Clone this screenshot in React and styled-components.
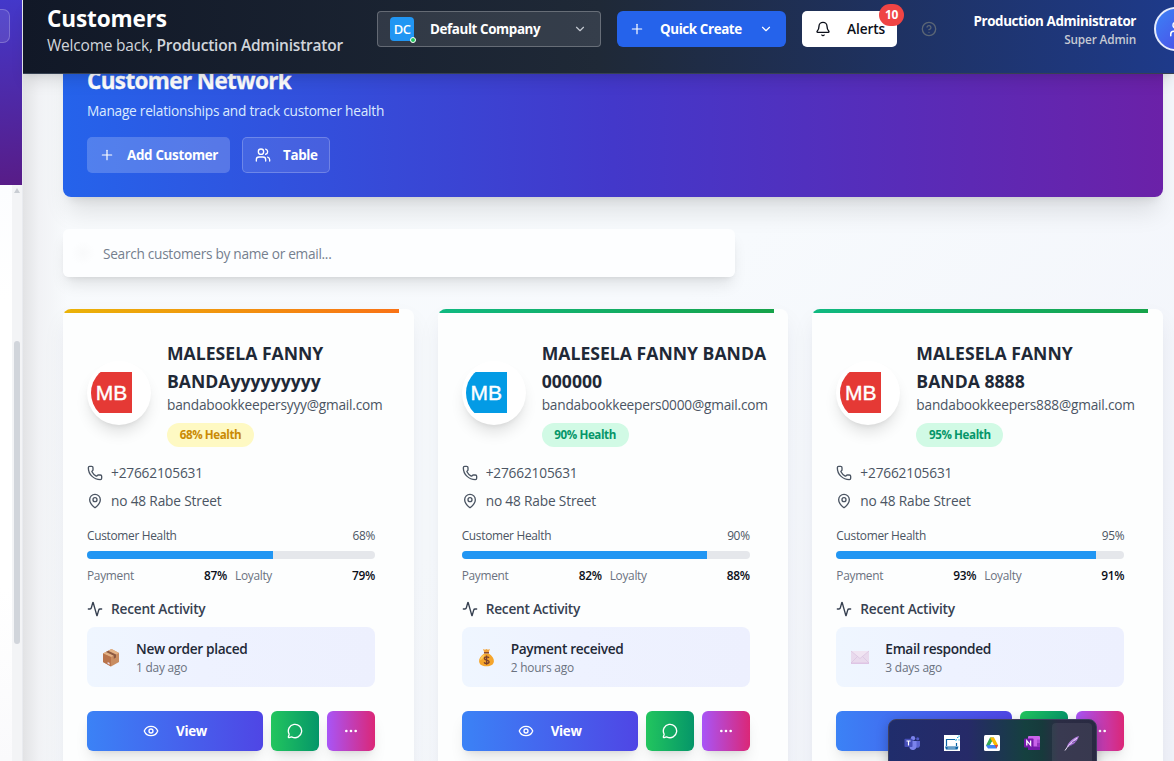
import React from "react";
import styled, { createGlobalStyle, css } from "styled-components";
import { Plus, ChevronDown, Bell, CircleHelp, Users, User, Phone, MapPin, Activity, Eye, MessageCircle, Ellipsis } from "lucide-react";

const Global = createGlobalStyle`
  * { box-sizing: border-box; }
  body { margin: 0; overflow: hidden; font-family: "Open Sans", "Noto Sans", sans-serif; }
  button { font-family: inherit; border: 0; padding: 0; margin: 0; }
  h1, h2, h3, p { margin: 0; }
  svg { flex: none; display: block; }
`;

const type = (size, line, weight, color, spacing = 0) => css`
  font-size: ${size}px;
  line-height: ${line}px;
  font-weight: ${weight};
  color: ${color};
  letter-spacing: ${spacing}px;
  white-space: nowrap;
`;

const Shell = styled.div`
  width: 1174px;
  height: 761px;
  display: grid;
  grid-template-columns: 23px 1fr;
  overflow: hidden;
  position: relative;
`;
const Sidebar = styled.aside`
  display: flex;
  flex-direction: column;
  height: 761px;
  background: #fff;
  border-right: 1px solid #e9ebef;
`;
const SidebarBrand = styled.div`
  height: 185px;
  padding-top: 9px;
  background: linear-gradient(174deg, #4338ca, #581c87);
`;
const CollapseButton = styled.button`
  display: block;
  width: 10px;
  height: 34px;
  border: 1px solid rgba(255, 255, 255, 0.22);
  border-left: 0;
  border-radius: 0 7px 7px 0;
  background: rgba(255, 255, 255, 0.1);
`;
const SidebarScroll = styled.div`
  flex: 1;
  display: flex;
  justify-content: flex-end;
  background: linear-gradient(#fcfdff, #fff 20%, #fff 70%, #fafafc);
`;
const Track = styled.div`
  width: 10px;
  display: flex;
  flex-direction: column;
  align-items: center;
  padding-top: 3px;
  background: #f3f4f6;
`;
const ArrowUp = styled.svg`
  margin-bottom: 148px;
`;
const Thumb = styled.div`
  width: 6px;
  height: 303px;
  border-radius: 3px;
  background: #d1d5db;
`;

const Main = styled.main`
  display: flex;
  flex-direction: column;
  min-width: 0;
  height: 761px;
  background: linear-gradient(90deg, #e2e3e5 0, rgba(240, 241, 244, 0.9) 16px, rgba(248, 250, 252, 0) 44px),
    linear-gradient(135deg, #f8fafc, #f7fafd 50%, #f1f3fa);
`;
const TopBar = styled.header`
  flex: none;
  height: 74px;
  position: relative;
  z-index: 2;
  display: flex;
  align-items: flex-start;
  padding: 7px 0 0 24px;
  background: linear-gradient(90deg, #111827, #1f2937 50%, #1e3a8a);
  border-bottom: 1px solid #364152;
  box-shadow: 0 10px 15px -3px rgba(0, 0, 0, 0.1), 0 4px 6px -2px rgba(0, 0, 0, 0.06);
`;
const Heading = styled.div`
  width: 330px;
  flex: none;
`;
const PageTitle = styled.h1`
  ${type(22.6, 24, 700, "#fff", -0.15)}
`;
const Welcome = styled.p`
  ${type(15.5, 24, 400, "#d1d5db", -0.21)}
  margin-top: 2px;
  b { font-weight: 600; }
`;
const CompanySelect = styled.button`
  width: 224px;
  height: 36px;
  margin-top: 4px;
  flex: none;
  display: flex;
  align-items: center;
  padding: 0 13px 0 12px;
  border: 1px solid rgba(255, 255, 255, 0.25);
  border-radius: 4px;
  background: rgba(255, 255, 255, 0.1);
`;
const CompanyBadge = styled.span`
  ${type(13, 24, 600, "#fff", -0.7)}
  position: relative;
  width: 24px;
  height: 24px;
  border-radius: 4px;
  text-align: center;
  background: #2196f3;
`;
const OnlineDot = styled.i`
  position: absolute;
  right: -2px;
  bottom: -2px;
  width: 6px;
  height: 6px;
  border-radius: 50%;
  border: 1px solid #fff;
  background: #22c55e;
`;
const CompanyName = styled.span`
  ${type(13.4, 20, 700, "#fff", -0.4)}
  flex: 1;
  margin-left: 16px;
  text-align: left;
`;
const QuickCreate = styled.button`
  width: 169px;
  height: 36px;
  margin: 4px 0 0 16px;
  flex: none;
  display: flex;
  align-items: center;
  padding: 0 13px 0 12px;
  border-radius: 6px;
  color: #fff;
  background: #2563eb;
  span { ${type(13.4, 20, 700, "#fff", -0.4)} margin: 0 auto 0 15px; }
`;
const AlertsButton = styled.button`
  width: 95px;
  height: 36px;
  margin: 4px 0 0 16px;
  flex: none;
  display: flex;
  align-items: center;
  gap: 16px;
  padding-left: 13px;
  border-radius: 5px;
  position: relative;
  background: #fff;
  color: #0b0f19;
`;
const AlertsLabel = styled.span`
  ${type(13.7, 20, 600, "#0b0f19", -0.1)}
`;
const AlertCount = styled.span`
  ${type(12, 22, 700, "#fff", -0.4)}
  position: absolute;
  right: -7px;
  top: -7px;
  width: 25px;
  height: 22px;
  border-radius: 11px;
  text-align: center;
  background: #ef4444;
`;
const HelpIcon = styled(CircleHelp)`
  margin: 14px 0 0 24px;
  color: #5b6675;
`;
const Account = styled.div`
  width: 200px;
  text-align: right;
  padding-top: 4px;
`;
const AccountName = styled.div`
  ${type(13.4, 20, 700, "#fff", -0.4)}
`;
const AccountRole = styled.div`
  ${type(11.8, 16, 600, "#c5cad3", -0.15)}
`;
const AccountSlot = styled.div`
  width: 20px;
  height: 44px;
  margin-left: 18px;
  flex: none;
`;
const AccountAvatar = styled.div`
  width: 44px;
  height: 44px;
  display: grid;
  place-items: center;
  border-radius: 50%;
  border: 2px solid #e5ebfb;
  color: #fff;
  background: linear-gradient(135deg, #3b82f6, #4f46e5);
`;

const Content = styled.div`
  flex: 1;
  min-height: 0;
  overflow: hidden;
  padding: 0 11px 0 40px;
`;
const Hero = styled.section`
  height: 158px;
  margin-top: -35px;
  padding: 24px;
  border-radius: 8px;
  background: linear-gradient(to right, #2563eb, #4338ca 50%, #6b21a8);
  box-shadow: 0 20px 25px -5px rgba(0, 0, 0, 0.1), 0 8px 10px -6px rgba(0, 0, 0, 0.1);
`;
const HeroTitle = styled.h2`
  ${type(22.5, 36, 700, "#fff", -0.63)}
  -webkit-text-stroke: 0.3px #fff;
`;
const HeroText = styled.p`
  ${type(13.7, 20, 400, "#dbeafe", -0.25)}
  margin-top: 2px;
`;
const HeroActions = styled.div`
  display: flex;
  gap: 12px;
  margin-top: 16px;
`;
const HeroButton = styled.button`
  width: ${(p) => p.$width}px;
  height: 36px;
  display: flex;
  align-items: center;
  gap: 12px;
  padding-left: ${(p) => (p.$outlined ? 12 : 11)}px;
  border-radius: 5px;
  color: #fff;
  background: rgba(255, 255, 255, ${(p) => (p.$outlined ? 0.1 : 0.2)});
  border: ${(p) => (p.$outlined ? "1px solid rgba(255, 255, 255, 0.22)" : "1px solid transparent")};
  span { ${type(13.4, 20, 700, "#fff", -0.32)} }
`;
const SearchField = styled.div`
  ${type(13.7, 20, 400, "#757f8e", -0.3)}
  width: 672px;
  height: 48px;
  margin-top: 32px;
  padding: 15px 0 0 40px;
  border-radius: 6px;
  background: radial-gradient(circle at 20px 24px, #f9fafb 0, #fdfeff 12px);
  box-shadow: 0 10px 15px -3px rgba(0, 0, 0, 0.1), 0 4px 6px -4px rgba(0, 0, 0, 0.1);
`;
const CardGrid = styled.div`
  display: grid;
  grid-template-columns: repeat(3, 1fr);
  gap: 24px;
  margin-top: 32px;
`;
const Card = styled.article`
  height: 480px;
  border-radius: 8px;
  overflow: hidden;
  background: #fdfefe;
`;
const CardShadow = styled.div`
  min-width: 0;
  border-radius: 8px;
  box-shadow: 0 10px 25px -3px rgba(30, 30, 60, 0.08), 0 4px 6px -4px rgba(0, 0, 0, 0.08);
`;
const Stripe = styled.div`
  width: 336px;
  height: 4px;
  background: ${(p) => (p.$warm ? "linear-gradient(90deg, #eab308, #f97316)" : "linear-gradient(90deg, #10b981, #16a34a)")};
`;
const CardBody = styled.div`
  width: 336px;
  padding: 26px 24px;
`;
const Profile = styled.div`
  display: flex;
  align-items: center;
  gap: 16px;
`;
const AvatarRing = styled.div`
  width: 64px;
  height: 64px;
  flex: none;
  padding: 4px;
  border-radius: 50%;
  background: #fff;
  box-shadow: 0 10px 15px -3px rgba(0, 0, 0, 0.12), 0 4px 6px -4px rgba(0, 0, 0, 0.1);
`;
const AvatarDisc = styled.div`
  width: 56px;
  height: 56px;
  border-radius: 50%;
  overflow: hidden;
  display: flex;
  align-items: center;
`;
const AvatarImage = styled.div`
  width: 41px;
  height: 41px;
  margin-top: -1px;
  background: ${(p) => p.$color};
  font-family: "Liberation Sans", sans-serif;
  font-size: 21px;
  line-height: 41px;
  text-align: center;
  color: #fff;
  -webkit-text-stroke: 0.4px #fff;
`;
const CustomerName = styled.h3`
  ${type(17.6, 28, 700, "#1f2937", 0.02)}
`;
const Email = styled.div`
  ${type(13.7, 20, 400, "#4b5563", -0.21)}
`;
const HealthBadge = styled.span`
  ${type(11.6, 24, 700, "#ca8a04", -0.4)}
  display: block;
  width: 87px;
  height: 24px;
  margin-top: 8px;
  border-radius: 12px;
  text-align: center;
  color: ${(p) => (p.$warm ? "#ca8a04" : "#059669")};
  background: ${(p) => (p.$warm ? "#fef9c3" : "#d1fae5")};
`;
const ContactList = styled.div`
  display: grid;
  gap: 8px;
  margin-top: 16px;
`;
const ContactRow = styled.div`
  ${type(13.7, 20, 400, "#4b5563", -0.17)}
  display: flex;
  align-items: center;
  gap: 8px;
`;
const HealthHead = styled.div`
  ${type(11.9, 16, 400, "#4b5563", -0.3)}
  display: flex;
  justify-content: space-between;
  margin-top: 16px;
`;
const Meter = styled.div`
  height: 8px;
  margin-top: 8px;
  border-radius: 4px;
  overflow: hidden;
  background: #e5e7eb;
`;
const MeterFill = styled.div`
  height: 8px;
  background: #2196f3;
`;
const Scores = styled.div`
  display: grid;
  grid-template-columns: 1fr 1fr;
  gap: 8px;
  margin-top: 8px;
`;
const Score = styled.div`
  ${type(11.9, 16, 400, "#6b7280", -0.3)}
  display: flex;
  justify-content: space-between;
  b { font-weight: 600; color: #0b0f19; }
`;
const ActivityHead = styled.div`
  ${type(13.7, 20, 600, "#374151", -0.23)}
  display: flex;
  align-items: center;
  gap: 8px;
  margin-top: 16px;
`;
const ActivityBox = styled.div`
  height: 60px;
  margin-top: 8px;
  display: flex;
  align-items: center;
  gap: 14px;
  padding-left: 13px;
  border-radius: 8px;
  background: linear-gradient(90deg, #eff6ff, #eef2ff 40%, #edf0fe);
`;
const ActivityTitle = styled.div`
  ${type(13.7, 20, 600, "#1f2937", -0.34)}
`;
const ActivityTime = styled.div`
  ${type(11.9, 16, 400, "#6b7280", -0.2)}
`;
const Actions = styled.div`
  display: grid;
  grid-template-columns: 176px 48px 48px;
  gap: 8px;
  margin-top: 24px;
`;
const gradients = {
  view: "#3b82f6, #4f46e5",
  chat: "#22c55e, #059669",
  more: "#a855f7, #db2777",
};
const ActionButton = styled.button`
  ${type(13.4, 20, 700, "#fff", -0.3)}
  height: 40px;
  display: flex;
  align-items: center;
  justify-content: center;
  gap: 17px;
  border-radius: 6px;
  background: linear-gradient(90deg, ${(p) => gradients[p.$kind]});
  box-shadow: 0 10px 15px -3px rgba(0, 0, 0, 0.1), 0 4px 6px -4px rgba(0, 0, 0, 0.1);
`;

const Tray = styled.div`
  position: absolute;
  left: 888px;
  top: 719px;
  width: 209px;
  height: 50px;
  z-index: 5;
  display: flex;
  padding: 3px 4px 0 3px;
  border: 1px solid #3e3f5e;
  border-radius: 8px;
  background: linear-gradient(90deg, #202d6c, #262a68 38%, #15403f 66%, #173a3c 74%, #2b2c44 82%, #292a42);
  box-shadow: 0 4px 12px rgba(0, 0, 0, 0.25);
`;
const TrayItem = styled.div`
  width: 40px;
  height: 50px;
  display: flex;
  justify-content: center;
  padding-top: 12px;
  border-radius: 4px;
  background: ${(p) => (p.$active ? "rgba(255,255,255,0.07)" : "transparent")};
`;

const PackageIcon = () => (
  <svg width="22" height="22" viewBox="0 0 22 22">
    <path d="M3 7.500 11.500 3 19 7v9L11 20.500l-8-4.500z" fill="#c98d61" />
    <path d="M3 7.500 11.500 3 19 7l-8 4z" fill="#e3b184" />
    <path d="M3 7.500 11 11v9.500l-8-4.500z" fill="#b9744c" />
    <path d="M6 5.900 8.200 4.700 16 8.500v3l-2.200 1.200V9.700z" fill="#8d5a42" />
    <path d="M7.600 16.100l2 1v1.700l-2-1z" fill="#e8dcec" />
  </svg>
);
const MoneyIcon = () => (
  <svg width="22" height="22" viewBox="0 0 22 22">
    <path d="M8 3l2 .8 1.500-.9 1.400.9 2-.8-1.300 3.400H9.300z" fill="#f2a33a" />
    <path d="M9.200 7.500h4.600c3.300 2 5.400 5 5.100 8-.3 3.200-3 4.700-7.400 4.700s-7.100-1.500-7.400-4.700C3.800 12.500 5.900 9.500 9.200 7.500z" fill="#f5a52c" />
    <path d="M8 9c-2 1.500-3 3.500-3 5.500 2-1 4-3 5-6z" fill="#fbc85a" />
    <path d="M9 6h5v1.500H9z" fill="#8b4a2f" />
    <path d="M14 11.800c-.5-.8-1.400-1-2.400-1-1.300 0-2.200.6-2.200 1.600 0 2.300 4.700 1.100 4.700 3.400 0 1.100-1 1.700-2.400 1.700-1.200 0-2.100-.4-2.600-1.200M11.600 9.500v9.300" fill="none" stroke="#7a3f2a" strokeWidth="1.300" />
  </svg>
);
const MailIcon = () => (
  <svg width="22" height="22" viewBox="0 0 22 22">
    <path d="M2 5h18v12.500H2z" fill="#e9daed" />
    <path d="M2 5h18l-9 7.500z" fill="#f0e4f2" />
    <path d="M2 5l9 7.500L20 5M2 17l6.500-6.500M20 17l-6.500-6.500" fill="none" stroke="#d8c3e0" strokeWidth=".7" />
    <path d="M2 16.700h18v1H2z" fill="#d9b6de" />
  </svg>
);
const activityIcons = { order: PackageIcon, payment: MoneyIcon, email: MailIcon };

const TeamsIcon = () => (
  <svg width="16" height="16" viewBox="0 0 16 16">
    <circle cx="9" cy="3.200" r="2.200" fill="#7b83eb" />
    <circle cx="13.700" cy="3.800" r="1.500" fill="#5059c9" />
    <path d="M11.500 6H16v4.500a2.600 2.600 0 0 1-4.500 1.500z" fill="#5b63d0" />
    <path d="M6 6h6.500v5.500a3.700 3.700 0 0 1-7 1.500z" fill="#7b83eb" />
    <rect x="0.500" y="3.700" width="8" height="8.300" rx="0.800" fill="#464eb8" />
    <path d="M2.500 6h4M4.500 6v4.500" stroke="#fff" strokeWidth="1.200" />
  </svg>
);
const RemoteIcon = () => (
  <svg width="16" height="16" viewBox="0 0 16 16">
    <rect width="16" height="16" fill="#fff" />
    <path d="M2.500 11V4.500H11M12.500 8v3" fill="none" stroke="#0b62a4" strokeWidth="1.200" />
    <path d="M1 11.500h13.500l-1 3H2z" fill="#0b62a4" />
    <path d="M3.500 13h8" stroke="#cfe4f4" strokeWidth=".9" />
    <path d="M11.500 5.500l1.200-1.200M13 2.500h1.300M15 .6v1.200M14.500 4.800h1" stroke="#16a9e1" strokeWidth="1.200" />
  </svg>
);
const DriveIcon = () => (
  <svg width="16" height="16" viewBox="0 0 16 16">
    <rect width="16" height="16" rx="1.500" fill="#fff" />
    <path d="M6 2.500h4L5 13.200 2 10.500z" fill="#34a853" />
    <path d="M6 2.500h4l4 7.500h-4z" fill="#fbbc04" />
    <path d="M2 10.500L4 13.500h8.500L14 10H6z" fill="#4285f4" />
    <path d="M10.800 10H14l-1.500 3.500z" fill="#ea4335" />
    <path d="M8 6.500l2 3.500H6z" fill="#fff" />
  </svg>
);
const NoteIcon = () => (
  <svg width="16" height="16" viewBox="0 0 16 16">
    <rect x="4" y="1" width="12" height="14" rx="1" fill="#ca64ea" />
    <path d="M13 4.500h3V8h-3z" fill="#ae4bd5" />
    <path d="M13 8h3v3.500h-3z" fill="#9332bf" />
    <path d="M4 11.500h12V15H4z" fill="#7719aa" />
    <rect x="0" y="3.500" width="9.500" height="9" rx=".8" fill="#7719aa" />
    <path d="M2.800 10.500V5.700l3.800 4.600V5.500" fill="none" stroke="#fff" strokeWidth="1.300" />
  </svg>
);
const FeatherIcon = () => (
  <svg width="16" height="16" viewBox="0 0 16 16">
    <path d="M15 1C9 3 4.500 6.500 2.800 12 8 11 13 7.500 15 1z" fill="#b57fe0" />
    <path d="M1 15.500C4 10.500 8 7 13 3" fill="none" stroke="#efe2fb" strokeWidth="1" />
    <path d="M5 11l6-2.500M8 7.500L12 6" stroke="#5b3a86" strokeWidth=".7" />
  </svg>
);

const customers = [
  { name: ["MALESELA FANNY", "BANDAyyyyyyyyy"], email: "bandabookkeepersyyy@gmail.com", color: "#e53935", health: 68, payment: 87, loyalty: 79, kind: "order", title: "New order placed", time: "1 day ago", warm: true },
  { name: ["MALESELA FANNY BANDA", "000000"], email: "bandabookkeepers0000@gmail.com", color: "#039be5", health: 90, payment: 82, loyalty: 88, kind: "payment", title: "Payment received", time: "2 hours ago" },
  { name: ["MALESELA FANNY", "BANDA 8888"], email: "bandabookkeepers888@gmail.com", color: "#e53935", health: 95, payment: 93, loyalty: 91, kind: "email", title: "Email responded", time: "3 days ago" },
];

function CustomerCard({ c }) {
  const Icon = activityIcons[c.kind];
  return (
    <CardShadow>
      <Card>
        <Stripe $warm={c.warm} />
        <CardBody>
          <Profile>
            <AvatarRing><AvatarDisc><AvatarImage $color={c.color}>MB</AvatarImage></AvatarDisc></AvatarRing>
            <div>
              <CustomerName>{c.name[0]}<br />{c.name[1]}</CustomerName>
              <Email>{c.email}</Email>
              <HealthBadge $warm={c.warm}>{c.health}% Health</HealthBadge>
            </div>
          </Profile>
          <ContactList>
            <ContactRow><Phone size={16} strokeWidth={2} />+27662105631</ContactRow>
            <ContactRow><MapPin size={16} strokeWidth={2} />no 48 Rabe Street</ContactRow>
          </ContactList>
          <HealthHead><span>Customer Health</span><span>{c.health}%</span></HealthHead>
          <Meter><MeterFill style={{ width: `${(c.health / 100) * 273}px` }} /></Meter>
          <Scores>
            <Score>Payment<b>{c.payment}%</b></Score>
            <Score>Loyalty<b>{c.loyalty}%</b></Score>
          </Scores>
          <ActivityHead><Activity size={16} strokeWidth={2} />Recent Activity</ActivityHead>
          <ActivityBox>
            <Icon />
            <div>
              <ActivityTitle>{c.title}</ActivityTitle>
              <ActivityTime>{c.time}</ActivityTime>
            </div>
          </ActivityBox>
          <Actions>
            <ActionButton $kind="view"><Eye size={16} />View</ActionButton>
            <ActionButton $kind="chat"><MessageCircle size={16} /></ActionButton>
            <ActionButton $kind="more"><Ellipsis size={16} /></ActionButton>
          </Actions>
        </CardBody>
      </Card>
    </CardShadow>
  );
}

export default function App() {
  return (
    <Shell>
      <Global />
      <Sidebar>
        <SidebarBrand><CollapseButton /></SidebarBrand>
        <SidebarScroll>
          <Track>
            <ArrowUp width="6" height="5" viewBox="0 0 6 5"><path d="M3 0L6 5H0z" fill="#c9cdd3" /></ArrowUp>
            <Thumb />
          </Track>
        </SidebarScroll>
      </Sidebar>
      <Main>
        <TopBar>
          <Heading>
            <PageTitle>Customers</PageTitle>
            <Welcome>Welcome back, <b>Production Administrator</b></Welcome>
          </Heading>
          <CompanySelect>
            <CompanyBadge>DC<OnlineDot /></CompanyBadge>
            <CompanyName>Default Company</CompanyName>
            <ChevronDown size={14} color="#c4c9d1" />
          </CompanySelect>
          <QuickCreate><Plus size={16} strokeWidth={1.8} /><span>Quick Create</span><ChevronDown size={14} /></QuickCreate>
          <AlertsButton>
            <Bell size={16} strokeWidth={2} /><AlertsLabel>Alerts</AlertsLabel><AlertCount>10</AlertCount>
          </AlertsButton>
          <HelpIcon size={16} strokeWidth={2} />
          <Account>
            <AccountName>Production Administrator</AccountName>
            <AccountRole>Super Admin</AccountRole>
          </Account>
          <AccountSlot><AccountAvatar><User size={18} /></AccountAvatar></AccountSlot>
        </TopBar>
        <Content>
          <Hero>
            <HeroTitle>Customer Network</HeroTitle>
            <HeroText>Manage relationships and track customer health</HeroText>
            <HeroActions>
              <HeroButton $width={143}><Plus size={16} strokeWidth={1.8} /><span>Add Customer</span></HeroButton>
              <HeroButton $width={88} $outlined><Users size={16} strokeWidth={2} /><span>Table</span></HeroButton>
            </HeroActions>
          </Hero>
          <SearchField>Search customers by name or email...</SearchField>
          <CardGrid>{customers.map((c) => <CustomerCard key={c.email} c={c} />)}</CardGrid>
        </Content>
      </Main>
      <Tray>
        <TrayItem><TeamsIcon /></TrayItem>
        <TrayItem><RemoteIcon /></TrayItem>
        <TrayItem><DriveIcon /></TrayItem>
        <TrayItem><NoteIcon /></TrayItem>
        <TrayItem $active><FeatherIcon /></TrayItem>
      </Tray>
    </Shell>
  );
}
